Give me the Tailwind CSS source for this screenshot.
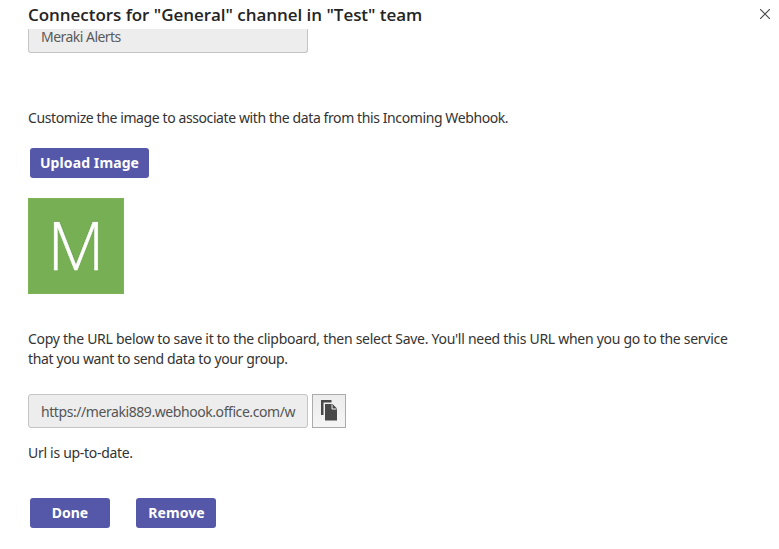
<!DOCTYPE html>
<html lang="en">
<head>
<meta charset="utf-8">
<title>Connectors</title>
<script src="https://cdn.jsdelivr.net/npm/@tailwindcss/browser@4"></script>
</head>
<body class="bg-white">
<div class="flex h-[549px] w-[779px] flex-col overflow-hidden bg-white font-['Noto_Sans',sans-serif] text-[14px] leading-5 text-[#333]">
  <header class="flex h-[29px] shrink-0 items-center justify-between pr-[9px] pl-7">
    <h1 class="whitespace-nowrap font-['Open_Sans',sans-serif] text-[17px] font-semibold tracking-[-0.04px] text-[#252424]">Connectors for "General" channel in "Test" team</h1>
    <button aria-label="Close" class="pb-px"><svg class="block" width="10" height="10" viewBox="0 0 10 10" fill="none" stroke="#484644" stroke-width="1.1"><path d="M0 0 10 10M10 0 0 10"/></svg></button>
  </header>
  <main class="flex flex-col items-start pl-7">
    <div class="flex h-6 w-[280px] items-start rounded-b-[3px] border border-t-0 border-[#c4c4c4] bg-[#ededed] pl-3 leading-[16px] text-[#5a5a5a]"><span class="whitespace-nowrap tracking-[-0.53px]">Meraki Alerts</span></div>
    <p class="mt-[55px] whitespace-nowrap tracking-[-0.4px]">Customize the image to associate with the data from this Incoming Webhook.</p>
    <button class="mt-5 ml-0.5 flex h-[30px] w-[119px] items-center justify-center rounded-[3px] bg-[#5558a8] font-bold tracking-[0.1px] whitespace-nowrap text-white">Upload Image</button>
    <div class="mt-5 flex h-24 w-24 items-center justify-center border border-[#7db558] bg-[#77b054] pb-[5px]">
      <span class="font-['Open_Sans',sans-serif] text-[66px] leading-none font-light text-white [-webkit-text-stroke:0.5px_white] [text-shadow:0_-1.5px_1px_#4d7c32]">M</span>
    </div>
    <p class="mt-[35px] whitespace-nowrap"><span class="tracking-[-0.28px]">Copy the URL below to save it to the clipboard, then select Save. You'll need this URL when you go to the service</span><br><span class="tracking-[-0.36px]">that you want to send data to your group.</span></p>
    <div class="mt-[25px] flex gap-1">
      <div class="flex h-[34px] w-[280px] items-center overflow-hidden rounded-[3px] border border-[#c4c4c4] bg-[#ededed] pt-px pl-3 text-[#555]"><span class="whitespace-nowrap tracking-[-0.43px]">https://meraki889.webhook.office.com/w</span></div>
      <button aria-label="Copy" class="flex h-[34px] w-[34px] items-center justify-center border border-[#ababab] bg-linear-to-b from-[#ececec] to-[#f5f5f5]">
        <svg width="18" height="22" viewBox="0 0 18 22"><path fill="#484848" d="M1 0h10.500v2.500H3.500V15H1z"/><path fill="#484848" d="M5 4h7.500L17 8.500V20.500H5z"/><path fill="none" stroke="#f1f1f1" stroke-width="1" d="M12 4.500v4.500h4.500"/></svg>
      </button>
    </div>
    <p class="mt-[15px] tracking-[-0.3px] whitespace-nowrap">Url is up-to-date.</p>
    <div class="mt-[35px] ml-0.5 flex gap-[26px] font-bold text-white">
      <button class="h-[30px] w-20 rounded-[3px] bg-[#5558a8]">Done</button>
      <button class="h-[30px] w-20 rounded-[3px] bg-[#5558a8] pl-px tracking-[0.1px]">Remove</button>
    </div>
  </main>
</div>
</body>
</html>
